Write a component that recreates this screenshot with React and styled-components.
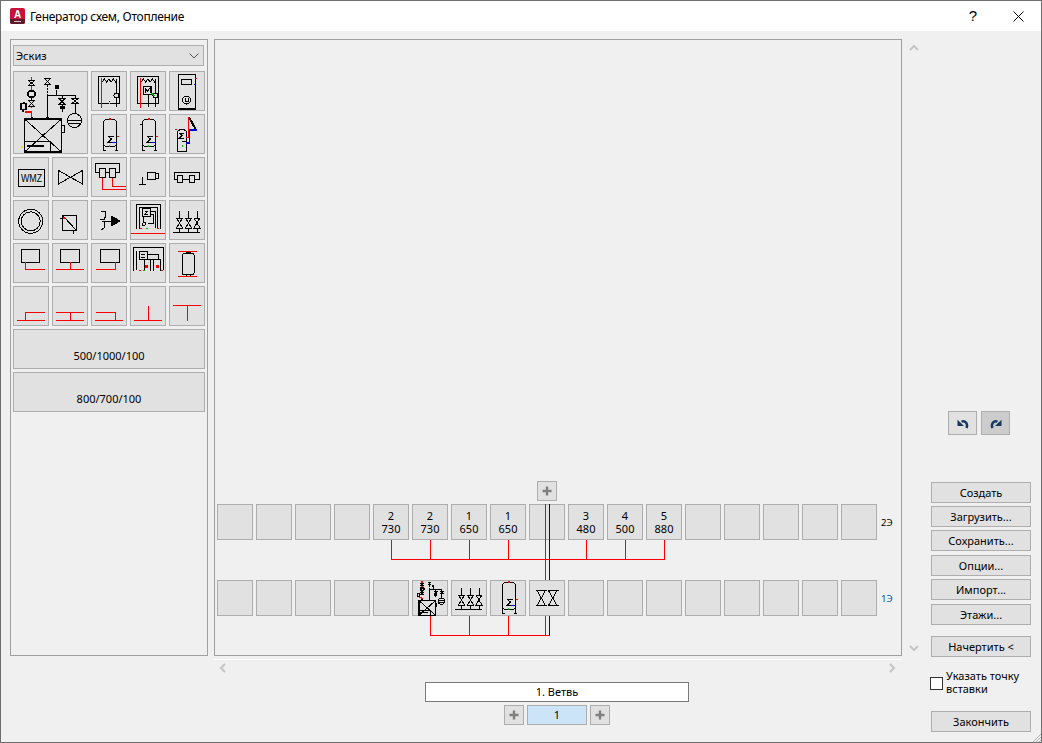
import React from "react";
import styled, { createGlobalStyle } from "styled-components";

const RED = "#ff0000";
const BLUE = "#0000d0";
const GREEN = "#00c000";
const YELLOW = "#e8e800";

const GlobalStyle = createGlobalStyle`
  html, body {
    margin: 0;
    padding: 0;
    background: #f0f0f0;
  }
  * {
    box-sizing: border-box;
  }
`

const Window = styled.div`
  position: relative;
  display: flex;
  flex-direction: column;
  width: 1042px;
  height: 743px;
  background: #f0f0f0;
  border: 1px solid #6e6e6e;
  font-family: "Noto Sans", sans-serif;
  font-size: 11px;
  color: #000;
  overflow: hidden;
`

const TitleBar = styled.header`
  display: flex;
  align-items: center;
  flex: none;
  height: 30px;
  padding-left: 9px;
  background: #fff;
`

const TitleText = styled.span`
  margin-left: 5px;
  font-size: 12px;
  letter-spacing: -0.28px;
`

const HelpButton = styled.span`
  margin-left: auto;
  width: 46px;
  padding-left: 2px;
  text-align: center;
  font-size: 15px;
  line-height: 28px;
  font-family: "Liberation Sans", sans-serif;
`

const CloseButton = styled.span`
  display: flex;
  align-items: center;
  justify-content: center;
  width: 46px;
  height: 30px;
`

const Body = styled.main`
  display: flex;
  flex: 1;
  padding: 8px 0 0 9px;
`

const SidePanel = styled.aside`
  display: flex;
  flex-direction: column;
  flex: none;
  gap: 5px;
  width: 198px;
  height: 617px;
  padding: 5px 2px;
  border: 1px solid #a0a0a0;
`

const Select = styled.div`
  display: flex;
  align-items: center;
  justify-content: space-between;
  width: 191px;
  height: 21px;
  padding: 0 4px 0 2px;
  background: #e1e1e1;
  border: 1px solid #adadad;
`

const Palette = styled.div`
  display: grid;
  grid-template-columns: repeat(5, 36px);
  grid-auto-rows: 40px;
  gap: 3px;
`

const Tile = styled.div`
  display: flex;
  align-items: center;
  justify-content: center;
  background: #e1e1e1;
  border: 1px solid #adadad;
  line-height: 13px;
  text-align: center;
`

const BigTile = styled(Tile)`
  grid-column: span 2;
  grid-row: span 2;
`

const WideTile = styled(Tile)`
  grid-column: span 5;
  align-items: flex-end;
  padding-bottom: 6px;
`

const Center = styled.section`
  display: flex;
  flex-direction: column;
  align-items: flex-start;
  flex: none;
  width: 708px;
  margin-left: 6px;
`

const CanvasRow = styled.div`
  display: flex;
`

const Canvas = styled.div`
  display: flex;
  flex-direction: column;
  justify-content: flex-end;
  width: 688px;
  height: 617px;
  padding-left: 2px;
  border: 1px solid #a0a0a0;
`

const Board = styled.div`
  position: relative;
  display: flex;
  flex-direction: column;
  width: 660px;
  height: 174px;
`

const Wires = styled.svg`
  position: absolute;
  top: 0;
  left: 0;
  pointer-events: none;
`

const SquareButton = styled.button`
  display: flex;
  align-items: center;
  justify-content: center;
  flex: none;
  width: 20px;
  height: 20px;
  padding: 0;
  background: #e1e1e1;
  border: 1px solid #adadad;
`

const AddFloor = styled(SquareButton)`
  margin: 0 0 3px 320px;
`

const FloorRow = styled.div`
  display: flex;
  gap: 3px;
  height: 36px;
  margin-bottom: ${(p) => p.$gap}px;
`

const SlotTile = styled(Tile)`
  flex: none;
  width: 36px;
  height: 36px;
`

const FloorLabel = styled.span`
  margin-left: 1px;
  align-self: center;
  font-size: 9.5px;
  color: ${(p) => p.$color};
`

const VScroll = styled.div`
  display: flex;
  flex-direction: column;
  justify-content: space-between;
  align-items: center;
  width: 20px;
  padding: 4px 0 3px 3px;
`

const HScroll = styled.div`
  display: flex;
  justify-content: space-between;
  align-items: flex-start;
  width: 688px;
  height: 23px;
  margin-top: 3px;
  padding: 3px 5px 0 4px;
  border-top: 1px solid #fff;
`

const BranchBox = styled.div`
  display: flex;
  flex-direction: column;
  align-items: center;
  gap: 3px;
  width: 264px;
  margin-left: 211px;
`

const NameField = styled.div`
  width: 264px;
  height: 20px;
  background: #fff;
  border: 1px solid #7a7a7a;
  line-height: 18px;
  text-align: center;
`

const Pager = styled.div`
  display: flex;
  gap: 3px;
`

const PageField = styled.div`
  width: 60px;
  height: 20px;
  background: #cce4f7;
  border: 1px solid #adadad;
  line-height: 18px;
  text-align: center;
`

const Actions = styled.nav`
  display: flex;
  flex-direction: column;
  flex: none;
  width: 100px;
  margin-left: 9px;
  padding-top: 372px;
`

const HistoryRow = styled.div`
  display: flex;
  gap: 4px;
  margin: 0 0 47px 17px;
`

const HistoryButton = styled.button`
  display: flex;
  align-items: center;
  justify-content: center;
  width: 29px;
  height: 24px;
  padding: 0;
  background: ${(p) => (p.$active ? "#cccccc" : "#e1e1e1")};
  border: 1px solid #adadad;
`

const ActionButton = styled.button`
  flex: none;
  width: 100px;
  height: 21px;
  margin-bottom: ${(p) => p.$after}px;
  padding: 0;
  background: #e1e1e1;
  border: 1px solid #adadad;
  font: inherit;
  color: #000;
`

const PickPoint = styled.label`
  display: flex;
  gap: 3px;
  height: 26px;
  margin: 0 0 16px -1px;
  line-height: 13px;
`

const CheckMark = styled.span`
  flex: none;
  width: 13px;
  height: 13px;
  margin-top: 8px;
  background: #fff;
  border: 1px solid #333;
`

const Grip = styled.svg`
  position: absolute;
  right: 0;
  bottom: 0;
`

const Glyph = styled.svg.attrs((p) => ({
  viewBox: p.viewBox || "0 0 36 40",
  fill: "none",
  stroke: "#000",
  strokeWidth: 1,
  shapeRendering: "crispEdges",
}))`
  flex: none;
  display: block;
  width: calc(100% + 2px);
  height: calc(100% + 2px);
  margin: -1px;

  * {
    vector-effect: non-scaling-stroke;
  }
`

const Chevron = ({ points }) => (
  <svg width="10" height="10" viewBox="0 0 10 10" fill="none" stroke="#c6c6c6" strokeWidth="2.2">
    <polyline points={points} />
  </svg>
)

const Plus = () => (
  <svg width="10" height="10" viewBox="0 0 10 10" stroke="#808080" strokeWidth="2.4">
    <path d="M5 .5v9M.5 5h9" />
  </svg>
)

const HistoryArrow = ({ flip }) => (
  <svg width="12" height="11" viewBox="0 0 12 11" style={flip ? { transform: "scaleX(-1)" } : undefined}>
    <path d="M9.5 10C11.2 6 8.5 2.2 4.5 3.6" fill="none" stroke="#17375e" strokeWidth="2.5" />
    <path d="M.5 1.8 7 8H.5z" fill="#17375e" />
  </svg>
)

const Bow = ({ x, y, w = 6, h = 10 }) => (
  <path d={`M${x - w / 2} ${y}h${w}L${x - w / 2} ${y + h}h${w}z`} />
)

const BigScheme = (props) => (
  <Glyph viewBox="0 0 75 82" {...props}>
    <path stroke={RED} d="M18.500 5v4M18.500 14v5M18.500 35v1M18.500 41v5M12 40.500h6.500" strokeWidth="1.400" />
    <Bow x={18.5} y={9} h={5} />
    <circle cx="18.500" cy="22.500" r="3.500" strokeWidth="2" />
    <path d="M18.500 26v3" />
    <Bow x={18.5} y={29} h={6} />
    <path d="M8 32h5v6H8zM11 30v2M10 38v2" strokeWidth="1.400" />
    <path d="M18.500 45v3" strokeWidth="2" />
    <Bow x={34.5} y={7} h={6} />
    <path d="M34.500 13v10" strokeDasharray="2 1" />
    <path d="M34.500 23v24" />
    <circle cx="34.500" cy="47" r="1" fill="#000" />
    <path d="M34.500 23.500h28M49 23.500v4M43.500 18v6M62.500 23.500v4M62.500 32v10" />
    <rect x="41.500" y="13.500" width="4" height="4" fill="#000" stroke="none" />
    <Bow x={49} y={27} h={6} />
    <path d="M49 33v7M47 35h4v2h-4z" fill="#000" />
    <Bow x={62} y={27} h={5} />
    <circle cx="61.500" cy="49" r="7" />
    <path d="M54.500 48.500h14M55.500 51.500h12" />
    <rect x="11.500" y="47.500" width="37" height="33" strokeWidth="1.400" />
    <path d="M11.500 47.500l37 33M48.500 47.500l-37 33" />
    <rect x="11.500" y="69.500" width="26" height="11" />
    <path d="M14 74.500h17" strokeWidth="1.400" />
    <path d="M48.500 53.500h3v7h-3z" />
    <rect x="8" y="74.500" width="1.500" height="2" fill={YELLOW} stroke="none" />
  </Glyph>
)

const Coil = (props) => (
  <Glyph {...props}>
    <rect x="7.500" y="5.500" width="21" height="27" />
    <path d="M11 11l2.500-3 2 3 2.500-3 2 3 2.500-3 2 3 1.500-3" />
    <path d="M25.500 8v14M25.500 27v9M18.500 30v3" />
    <circle cx="25.500" cy="24.500" r="2.500" />
    <path stroke={RED} d="M10.500 7v30" />
    <rect x="18" y="31" width="1.200" height="1.500" fill={YELLOW} stroke="none" />
  </Glyph>
)

const CoilMeter = (props) => (
  <Glyph {...props}>
    <rect x="7.500" y="5.500" width="21" height="27" />
    <path d="M11 11l2.500-3 2 3 2.500-3 2 3 2.500-3 2 3 1.500-3" />
    <rect x="13.500" y="15.500" width="8" height="8" />
    <path d="M15 22v-5l2.500 3 2.500-3v5M25.500 8v14M25.500 27v9M18.500 24v12" />
    <circle cx="25.500" cy="24.500" r="2.500" />
    <path stroke={RED} d="M10.500 7v30" />
    <path stroke={GREEN} d="M21.500 22l3 3" />
  </Glyph>
)

const Cabinet = (props) => (
  <Glyph {...props}>
    <rect x="9.500" y="3.500" width="16.500" height="34" />
    <rect x="12.500" y="8.500" width="10" height="5" />
    <circle cx="17.500" cy="29" r="4" />
    <path d="M16 26.500v4h3v-4M9 38.500h18" />
    <path stroke={RED} d="M26 7h1.500" />
    <path stroke={BLUE} d="M25 13h1.500" />
  </Glyph>
)

const Tank = ({ tick, ...props }) => (
  <Glyph {...props}>
    <path d="M12.500 36V9c0-2 2-3.500 4-3.500h5c2 0 4 1.500 4 3.500v27" />
    <path d="M12 31c3 2.500 11 2.500 14 0" />
    <path d="M22.500 22.500h-5l3 2.500-3 3h5" />
    <path d="M11.500 36.500h3M23.500 36.500h3M12.500 32v4" />
    {tick && <path d="M10 10.500h2.500" />}
    <path stroke={RED} d="M18 5h2M25.500 22.500h2" strokeWidth="1.300" />
    <path stroke={BLUE} d="M21 28.500h4.500" strokeWidth="1.300" />
    <path stroke={GREEN} d="M18.500 31v2" strokeWidth="1.300" />
  </Glyph>
)

const Solar = (props) => (
  <Glyph {...props}>
    <path d="M8.500 37V19c0-2 2-3.500 4.500-3.500s4.500 1.500 4.500 3.500v18zM8.500 37h9" />
    <path d="M14.500 19.500h-4l2.500 2-2.500 2.500h4M13 27h5" />
    <path d="M20 3l7 13" strokeWidth="2" />
    <path stroke={RED} d="M19.500 3v20H17" />
    <path stroke={BLUE} d="M27.500 16h-7v13H17" strokeWidth="1.400" />
    <path stroke={GREEN} d="M13 31v2" />
    <path stroke={RED} d="M6 15.500h2" />
  </Glyph>
)

const Wmz = (props) => (
  <Glyph {...props}>
    <rect x="5.500" y="12.500" width="26" height="16.500" />
    <text x="18.500" y="25" textAnchor="middle" fontFamily="Liberation Sans" fontSize="11" fill="#000" stroke="none" textLength="21" lengthAdjust="spacingAndGlyphs">WMZ</text>
  </Glyph>
)

const Bowtie = (props) => (
  <Glyph {...props}>
    <path d="M6.500 13.500v13.500l24-13.500v13.500z" />
  </Glyph>
)

const Manifold = (props) => (
  <Glyph {...props}>
    <rect x="4.500" y="6.500" width="24" height="9" />
    <rect x="8.500" y="11.500" width="6" height="9" fill="#e1e1e1" />
    <rect x="18.500" y="11.500" width="6" height="9" fill="#e1e1e1" />
    <path stroke={RED} d="M11.500 20.500v11.500h23.500M21.500 20.500v8.500h13.500" />
  </Glyph>
)

const Pump = (props) => (
  <Glyph {...props}>
    <path d="M12.500 20v7M9 27.500h7" />
    <path d="M17.500 15.500h7.500v7h-7.500zM25 16.500h3.500v5H25z" />
  </Glyph>
)

const Coupler = (props) => (
  <Glyph {...props}>
    <rect x="5.500" y="15.500" width="24.500" height="7" />
    <rect x="8.500" y="18.500" width="5" height="7" fill="#e1e1e1" />
    <rect x="20.500" y="18.500" width="5" height="7" fill="#e1e1e1" />
  </Glyph>
)

const Ring = (props) => (
  <Glyph {...props}>
    <circle cx="17.700" cy="21.300" r="12" />
    <circle cx="17.700" cy="21.300" r="9.500" />
  </Glyph>
)

const SquareValve = (props) => (
  <Glyph {...props}>
    <rect x="10.500" y="15.500" width="14" height="15" />
    <path d="M11 16l13.500 14.500M7.500 18.500h3M21.500 30.500v3" />
    <rect x="11" y="17" width="2" height="2" fill={RED} stroke="none" />
  </Glyph>
)

const Flame = (props) => (
  <Glyph {...props}>
    <path d="M20 16l9 5-9 5z" fill="#000" />
    <path d="M10 11h3c2 0 2 3 1.500 5l-1 3-4 1M20 21h-9M10 30l3-2c1-1 1-3 .5-5.500" />
  </Glyph>
)

const Station = (props) => (
  <Glyph {...props}>
    <path d="M6.500 29V4.500h24V29M9.500 29V7.500h18V28" />
    <rect x="12.500" y="8.500" width="8" height="8" />
    <path d="M18 11h-3l1.500 1.500L15 14h3M13.500 16v7M20.500 11h4.500v17M20.500 14h2.500v9h-5" />
    <circle cx="14" cy="24" r="1.500" />
    <path stroke={RED} d="M1 33.500h34M10 28.500h1.500M27 28.500h1.500" />
    <path stroke={GREEN} d="M16 28.500h1.500" />
  </Glyph>
)

const ValveTrio = (props) => (
  <Glyph {...props}>
    <path d="M4 32.500h27" />
    <path d="M10.500 11v7M10.500 28v4.500M19.500 11v7M19.500 28v4.500M28 11v7M28 28v4.500" />
    <Bow x={10.5} y={18} w={6} h={10} />
    <Bow x={19.5} y={18} w={6} h={10} />
    <Bow x={28} y={18} w={6} h={10} />
  </Glyph>
)

const Branch = ({ left, right, stem, ...props }) => (
  <Glyph {...props}>
    <rect x={left} y="6.500" width={right - left} height="12.500" />
    <path stroke={RED} d={stem} />
  </Glyph>
)

const Plant = (props) => (
  <Glyph {...props}>
    <path d="M3.500 28V4.500h30v22" />
    <rect x="9.500" y="8.500" width="8" height="8" />
    <path d="M6.500 27V7.500M11 11h4M11 14h4M17.500 11h10.500v5.500h-10M20.500 16v12M25.500 16.500h5v11M14.500 17v10M23.500 17v11" />
    <rect x="15" y="22" width="3" height="3" fill={RED} stroke="none" />
    <rect x="25.500" y="22" width="3" height="3" fill={RED} stroke="none" />
    <path stroke={RED} d="M9 27.500h1.500M31 27.500h1.500" />
    <path stroke={GREEN} d="M13 27.500h2" />
  </Glyph>
)

const Vessel = (props) => (
  <Glyph {...props}>
    <rect x="13.500" y="10.500" width="11.500" height="21" rx="1.500" />
    <path d="M17 10V9h4v1M17 32v1.500h4V32" />
    <path stroke={RED} d="M9 8.500h19M9 33.500h19" />
  </Glyph>
)

const Pipe = ({ d, ...props }) => (
  <Glyph {...props}>
    <path stroke={RED} d={d} />
  </Glyph>
)

const DoubleBowtie = (props) => (
  <Glyph {...props}>
    <path d="M7 9.500h10.500M7 24.500h10.500M8 9.500l8.500 15M16.500 9.500L8 24.500M18.500 9.500h11M18.500 24.500h11M19.500 9.500l8.500 15M28 9.500l-8.500 15" />
  </Glyph>
)

const TOP_SLOTS = {
  4: ["2", "730"],
  5: ["2", "730"],
  6: ["1", "650"],
  7: ["1", "650"],
  9: ["3", "480"],
  10: ["4", "500"],
  11: ["5", "880"],
}

const BOTTOM_SLOTS = {
  5: <BigScheme viewBox="6 2 60 80" />,
  6: <ValveTrio viewBox="0 3 36 36" />,
  7: <Tank viewBox="0 3 36 36" />,
  8: <DoubleBowtie viewBox="0 -1 36 36" />,
}

const SLOT_IDS = Array.from({ length: 17 }, (_, i) => i)

const BRANCH_TOP = [391.5, 430.5, 469.5, 508.5, 586.5, 625.5, 664.5]
const BRANCH_BOTTOM = [430.5, 469.5, 508.5]

const ACTIONS = [
  ["Создать", 3],
  ["Загрузить...", 3],
  ["Сохранить...", 4],
  ["Опции...", 3],
  ["Импорт...", 4],
  ["Этажи...", 11],
]

const App = () => (
  <Window>
    <GlobalStyle />
    <TitleBar>
      <svg width="15" height="16" viewBox="0 0 15 16">
        <rect width="15" height="16" rx="2" fill="#c8123c" />
        <path d="M0 11h15v3a2 2 0 0 1-2 2H2a2 2 0 0 1-2-2z" fill="#5d1a2b" />
        <text x="7.500" y="9.800" textAnchor="middle" fontFamily="Liberation Sans" fontWeight="700" fontSize="10" fill="#fff">A</text>
        <path d="M4 13.500h7" stroke="#d8c0c6" strokeWidth="1" />
      </svg>
      <TitleText>Генератор схем, Отопление</TitleText>
      <HelpButton>?</HelpButton>
      <CloseButton>
        <svg width="11" height="11" viewBox="0 0 11 11" stroke="#000" strokeWidth="1">
          <path d="M.5.500l10 10M10.500.500l-10 10" />
        </svg>
      </CloseButton>
    </TitleBar>
    <Body>
      <SidePanel>
        <Select>
          Эскиз
          <svg width="10" height="6" viewBox="0 0 10 6" fill="none" stroke="#555">
            <path d="M.5.500 5 5l4.500-4.500" />
          </svg>
        </Select>
        <Palette>
          <BigTile><BigScheme /></BigTile>
          <Tile><Coil /></Tile>
          <Tile><CoilMeter /></Tile>
          <Tile><Cabinet /></Tile>
          <Tile><Tank /></Tile>
          <Tile><Tank tick /></Tile>
          <Tile><Solar /></Tile>
          <Tile><Wmz /></Tile>
          <Tile><Bowtie /></Tile>
          <Tile><Manifold /></Tile>
          <Tile><Pump /></Tile>
          <Tile><Coupler /></Tile>
          <Tile><Ring /></Tile>
          <Tile><SquareValve /></Tile>
          <Tile><Flame /></Tile>
          <Tile><Station /></Tile>
          <Tile><ValveTrio /></Tile>
          <Tile><Branch left={8.5} right={26.5} stem="M12.500 19v7.500H32" /></Tile>
          <Tile><Branch left={8.5} right={27.5} stem="M18.500 19v7.500M4 26.500h28" /></Tile>
          <Tile><Branch left={9.5} right={28.5} stem="M24.500 19v7.500H5" /></Tile>
          <Tile><Plant /></Tile>
          <Tile><Vessel /></Tile>
          <Tile><Pipe d="M4 34.500h28M12.500 34.500v-8H32" /></Tile>
          <Tile><Pipe d="M4 34.500h28M4 26.500h28M18.500 26.500v8" /></Tile>
          <Tile><Pipe d="M4 34.500h28M4.500 26.500h20v8" /></Tile>
          <Tile><Pipe d="M4 34.500h28M18.500 20v14.500" /></Tile>
          <Tile><Pipe d="M4 19.500h28M18.500 19.500v15" /></Tile>
          <WideTile>500/1000/100</WideTile>
          <WideTile>800/700/100</WideTile>
        </Palette>
      </SidePanel>
      <Center>
        <CanvasRow>
          <Canvas>
            <Board>
              <AddFloor><Plus /></AddFloor>
              <FloorRow $gap={40}>
                {SLOT_IDS.map((id) => (
                  <SlotTile key={id}>
                    {TOP_SLOTS[id] && (
                      <span>
                        {TOP_SLOTS[id][0]}
                        <br />
                        {TOP_SLOTS[id][1]}
                      </span>
                    )}
                  </SlotTile>
                ))}
                <FloorLabel $color="#000">2Э</FloorLabel>
              </FloorRow>
              <FloorRow $gap={0}>
                {SLOT_IDS.map((id) => (
                  <SlotTile key={id}>{BOTTOM_SLOTS[id]}</SlotTile>
                ))}
                <FloorLabel $color="#0050a0">1Э</FloorLabel>
              </FloorRow>
              <Wires width="660" height="174" viewBox="217 481 660 174" fill="none" stroke={RED} shapeRendering="crispEdges">
                {BRANCH_TOP.map((x) => (
                  <path key={x} d={`M${x} 540v19`} />
                ))}
                <path d="M391 559.500h274" />
                <path d="M545.500 504v76M545.500 616v19" />
                {BRANCH_BOTTOM.map((x) => (
                  <path key={x} d={`M${x} 616v19`} />
                ))}
                <path d="M430 635.500h120" />
                <path stroke={BLUE} d="M549.500 504v76M549.500 616v19" />
              </Wires>
            </Board>
          </Canvas>
          <VScroll>
            <Chevron points="1,7 5,3 9,7" />
            <Chevron points="1,3 5,7 9,3" />
          </VScroll>
        </CanvasRow>
        <HScroll>
          <Chevron points="7,1 3,5 7,9" />
          <Chevron points="3,1 7,5 3,9" />
        </HScroll>
        <BranchBox>
          <NameField>1. Ветвь</NameField>
          <Pager>
            <SquareButton><Plus /></SquareButton>
            <PageField>1</PageField>
            <SquareButton><Plus /></SquareButton>
          </Pager>
        </BranchBox>
      </Center>
      <Actions>
        <HistoryRow>
          <HistoryButton><HistoryArrow /></HistoryButton>
          <HistoryButton $active><HistoryArrow flip /></HistoryButton>
        </HistoryRow>
        {ACTIONS.map(([label, after]) => (
          <ActionButton key={label} $after={after}>{label}</ActionButton>
        ))}
        <ActionButton $after={12}>Начертить &lt;</ActionButton>
        <PickPoint>
          <CheckMark />
          <span>Указать точку<br />вставки</span>
        </PickPoint>
        <ActionButton $after={0}>Закончить</ActionButton>
      </Actions>
    </Body>
    <Grip width="11" height="8" viewBox="0 0 11 8" stroke="#b0b0b0">
      <path d="M3 8l8-8M6 8l5-5M9 8l2-2" />
    </Grip>
  </Window>
)

export default App
